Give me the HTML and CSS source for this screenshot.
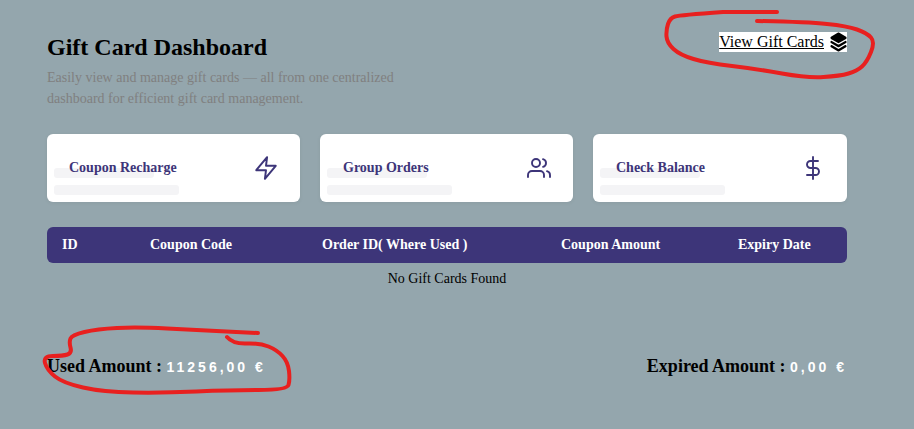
FILE: index.html
```html
<!DOCTYPE html>
<html lang="en">
<head>
<meta charset="utf-8">
<title>Gift Card Dashboard</title>
<link rel="stylesheet" href="styles.css">
</head>
<body>
<main class="page">
  <header class="top">
    <div class="intro">
      <h1 class="title">Gift Card Dashboard</h1>
      <p class="lead">Easily view and manage gift cards — all from one centralized dashboard for efficient gift card management.</p>
    </div>
    <a class="view-link" href="#"><span class="view-text">View Gift Cards</span>
      <svg class="stack" viewBox="0 0 24 24" width="17" height="20" preserveAspectRatio="none" aria-hidden="true"><path d="M12 2 2 7l10 5 10-5z" fill="#000"/><path d="M2 12l10 5 10-5"/><path d="M2 17l10 5 10-5"/></svg>
    </a>
  </header>

  <section class="cards">
    <article class="card">
      <span class="skel skel-a"></span><span class="skel skel-b"></span>
      <span class="card-label">Coupon Recharge</span>
      <svg class="card-icon icon-bolt" viewBox="0 0 24 24" aria-hidden="true"><path d="M13 2 3 14h9l-1 8 10-12h-9z"/></svg>
    </article>
    <article class="card card-inset">
      <span class="skel skel-a"></span><span class="skel skel-b"></span>
      <span class="card-label">Group Orders</span>
      <svg class="card-icon" viewBox="0 0 24 24" aria-hidden="true"><path d="M17 21v-2a4 4 0 0 0-4-4H5a4 4 0 0 0-4 4v2"/><circle cx="9" cy="7" r="4"/><path d="M23 21v-2a4 4 0 0 0-3-3.87"/><path d="M16 3.13a4 4 0 0 1 0 7.75"/></svg>
    </article>
    <article class="card card-inset">
      <span class="skel skel-a"></span><span class="skel skel-b"></span>
      <span class="card-label">Check Balance</span>
      <svg class="card-icon" viewBox="0 0 24 24" aria-hidden="true"><path d="M12 1v22"/><path d="M17 5H9.5a3.5 3.5 0 0 0 0 7h5a3.5 3.5 0 0 1 0 7H6"/></svg>
    </article>
  </section>

  <div class="thead">
    <span class="th th-id">ID</span>
    <span class="th th-code">Coupon Code</span>
    <span class="th th-order">Order ID( Where Used )</span>
    <span class="th th-amount">Coupon Amount</span>
    <span class="th th-expiry">Expiry Date</span>
  </div>
  <p class="empty">No Gift Cards Found</p>

  <footer class="totals">
    <div class="total"><span class="total-label">Used Amount :</span> <span class="total-value">11256,00 €</span></div>
    <div class="total"><span class="total-label">Expired Amount :</span> <span class="total-value">0,00 €</span></div>
  </footer>
</main>

<svg class="scribble" viewBox="0 0 914 429" width="914" height="429" aria-hidden="true">
  <path d="M777 12L723 12Q680 15 675 16.5Q670 18 668 24Q666 30 666.5 36.5Q667 43 673.5 49Q680 55 693.5 59Q707 63 732 66Q757 69 782 73.5Q807 78 823.5 77Q840 76 848.5 73.5Q857 71 862 66.5Q867 62 871 52Q875 42 871 37.5Q867 33 857 29.5Q847 26 827 24Q807 22 757 21"/>
  <path d="M258 333Q197 330 167 328.5Q137 327 117 328Q97 329 84.5 332Q72 335 70.5 338.5Q69 342 70.5 347.5Q72 353 67.5 354.5Q63 356 53 356Q43 356 45 363Q47 370 55 376.5Q63 383 83 387.5Q103 392 133 392.5Q163 393 196.5 391.5Q230 390 258.5 390Q287 390 288.5 385Q290 380 289 371Q288 362 282.5 356Q277 350 268.5 346.5Q260 343 246.5 343.5Q233 344 227 337"/>
</svg>
</body>
</html>
```

FILE: styles.css
```css
* { box-sizing: border-box; }
html, body { margin: 0; height: 100%; }
body {
  background: #94a6ad;
  font-family: "Liberation Serif", "Times New Roman", serif;
  color: #000;
  overflow: hidden;
}
.page { padding: 31px 67px 0 47px; position: relative; width: 914px; height: 429px; }
.top { display: flex; justify-content: space-between; align-items: flex-start; }
.title { margin: 0; font-size: 24px; line-height: 32px; font-weight: 700; }
.lead { margin: 4px 0 0; width: 380px; font-size: 14px; line-height: 21px; color: #808080; }
.view-link {
  display: flex; align-items: center; gap: 6px;
  background: #fff; color: #000; text-decoration: none;
  font-size: 16px; height: 20px; margin-top: 1px;
}
.view-text { text-decoration: underline; }
.stack { display: block; fill: none; stroke: #000; stroke-width: 2.8; stroke-linejoin: round; stroke-linecap: round; }
.cards { display: grid; grid-template-columns: 253px 253px 254px; gap: 20px; margin-top: 25px; }
.card {
  position: relative; height: 68px; background: #fff; border-radius: 6px;
  display: flex; align-items: center; justify-content: space-between;
  padding: 0 22px 0 22px;
  box-shadow: 0 1px 4px rgba(0,0,0,.06);
}
.card-inset { padding-left: 23px; }
.skel { position: absolute; left: 7px; background: #f4f4f6; border-radius: 3px; height: 10px; }
.skel-a { top: 34px; width: 100px; }
.skel-b { top: 51px; width: 125px; }
.card-label { position: relative; font-size: 14px; font-weight: 700; color: #3d3579; }
.card-icon { width: 24px; height: 24px; fill: none; stroke: #3d3579; stroke-width: 1.9; stroke-linecap: round; stroke-linejoin: round; display: block; }
.icon-bolt { width: 26px; height: 26px; margin-right: -1px; stroke-width: 1.8; }
.thead {
  display: block; position: relative; margin-top: 25px; height: 36px; background: #3d3579; border-radius: 6px;
}
.th { position: absolute; top: 0; line-height: 36px; font-size: 14px; font-weight: 700; color: #fff; white-space: nowrap; }
.th-id { left: 15px; }
.th-code { left: 103px; }
.th-order { left: 275px; }
.th-amount { left: 514px; }
.th-expiry { left: 691px; }
.empty { margin: 7px 0 0; text-align: center; font-size: 14px; line-height: 17px; }
.totals { display: flex; justify-content: space-between; margin-top: 67px; align-items: baseline; }
.total { font-size: 18px; line-height: 24px; white-space: nowrap; }
.total-label { font-weight: 700; }
.total-value { font-family: "Liberation Sans", Arial, sans-serif; font-size: 14px; font-weight: 700; letter-spacing: 3px; color: #fff; }
.scribble { position: absolute; left: 0; top: 0; pointer-events: none; fill: none; stroke: #e8201f; stroke-width: 4; stroke-linecap: round; stroke-linejoin: round; }
```
